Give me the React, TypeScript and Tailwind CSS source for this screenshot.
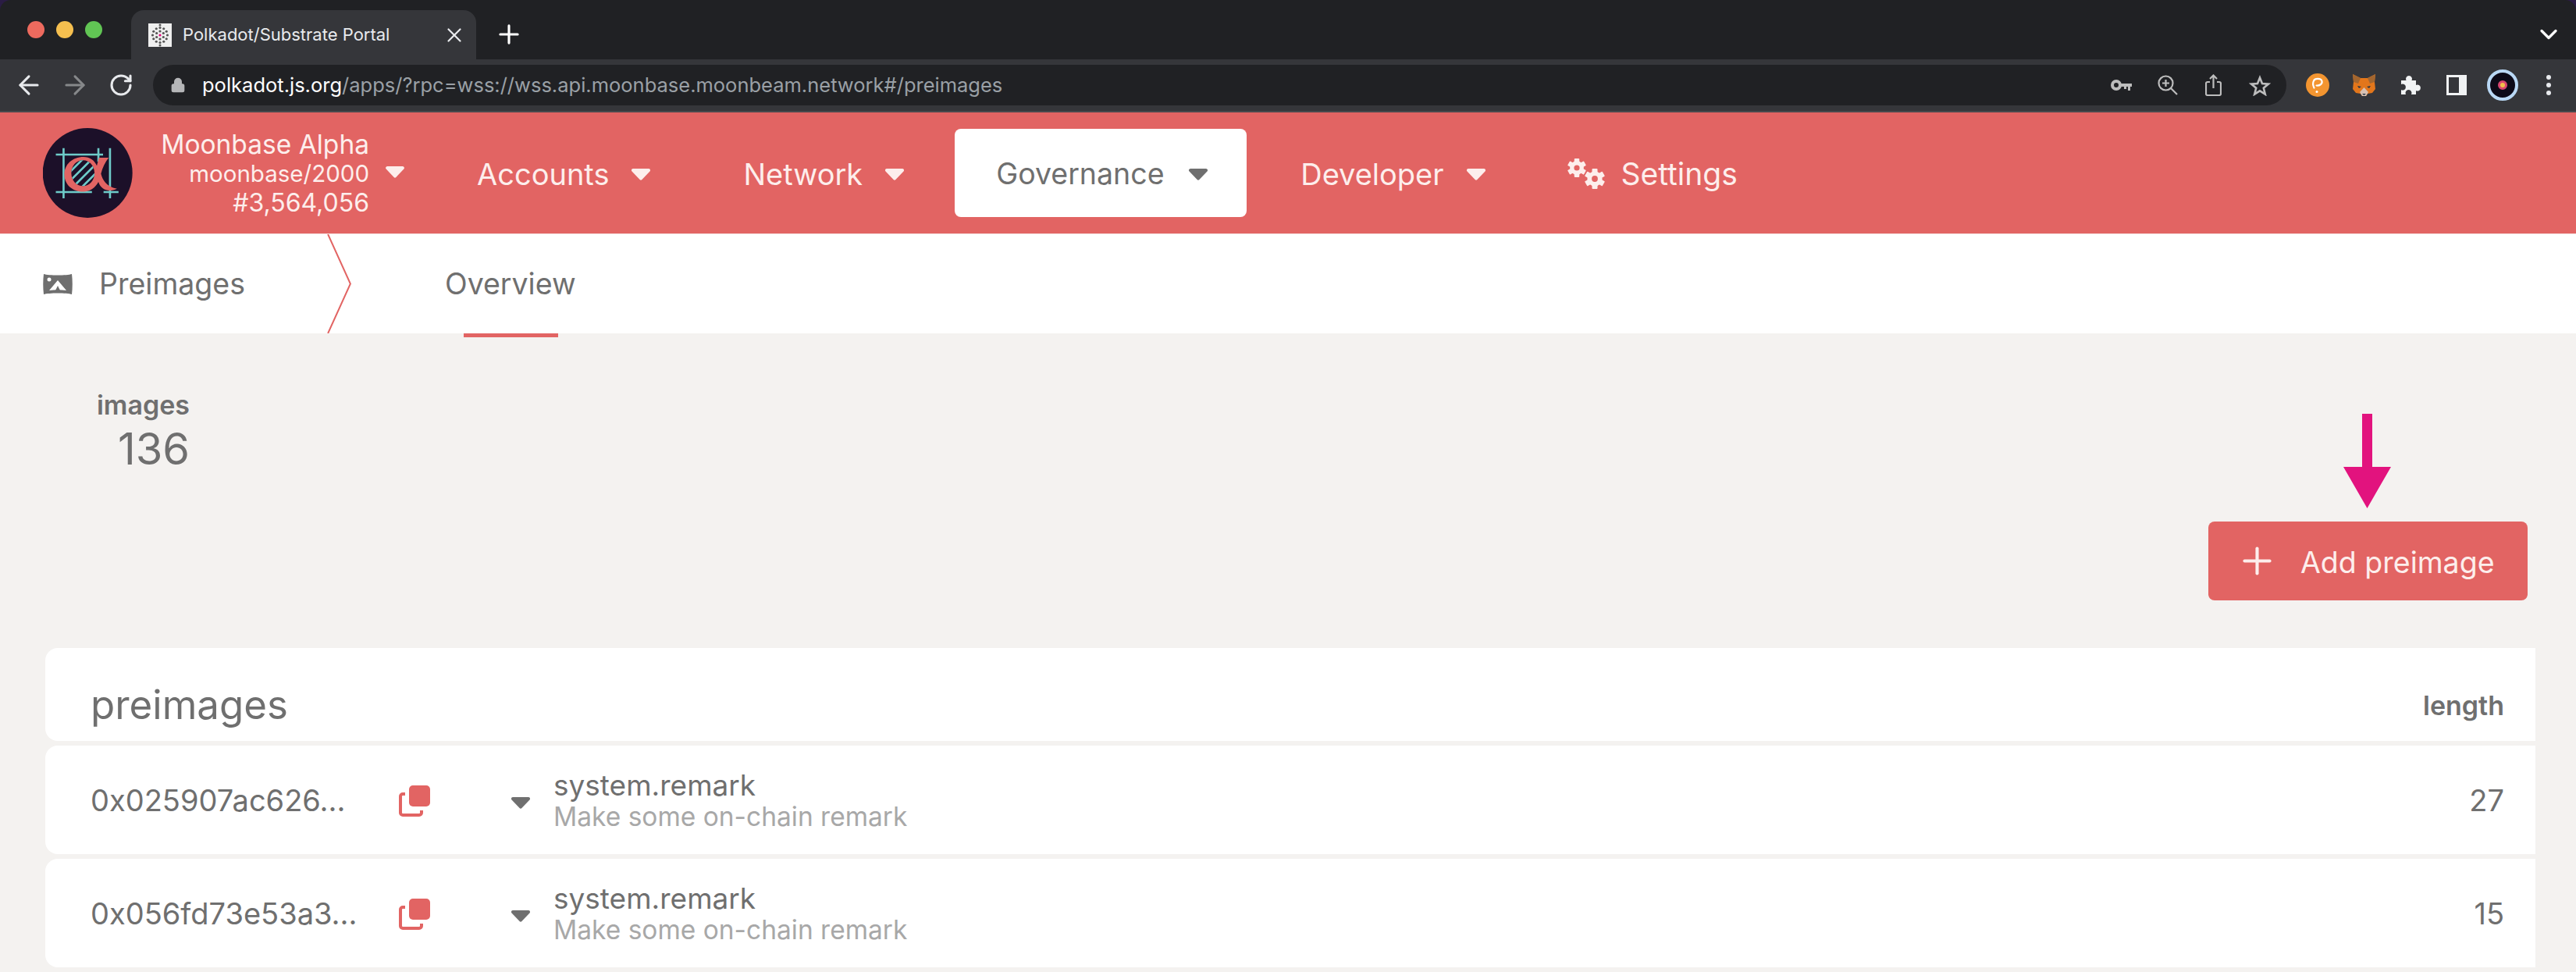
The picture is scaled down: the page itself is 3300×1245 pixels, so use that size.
import React from "react";
import { ArrowLeft, ArrowRight, RotateCw, Lock, Plus, X, ChevronDown } from "lucide-react";

const Caret = ({ className }: { className: string }) => (
  <svg viewBox="0 0 26 16" className={className} fill="currentColor">
    <path d="M2.5 0h21c2 0 3 2 2 3.500L14.500 15c-.8 1-2.200 1-3 0L.5 3.500C-.5 2 .5 0 2.500 0z" />
  </svg>
);

const Favicon = () => {
  const rings = [
    { r: 5, n: 6, off: 0 },
    { r: 9.5, n: 12, off: 0 },
  ];
  return (
    <svg viewBox="0 0 30 30" className="w-[30px] h-[30px] ml-[22px] shrink-0">
      <rect width="30" height="30" fill="#efefef" />
      <circle cx="15" cy="15" r="1.600" fill="#e6007a" />
      {rings.map((ring) =>
        Array.from({ length: ring.n }).map((_, i) => {
          const a = (i / ring.n) * Math.PI * 2 + Math.PI / 2;
          return <circle key={`${ring.r}-${i}`} cx={15 + ring.r * Math.cos(a)} cy={15 + ring.r * Math.sin(a)} r="1.600" fill="#555" />;
        })
      )}
      <circle cx="15" cy="2" r="1.500" fill="#555" />
      <circle cx="15" cy="28" r="1.500" fill="#555" />
    </svg>
  );
};

const Logo = () => (
  <svg viewBox="75 40 348 348" className="w-[115px] h-[115px] shrink-0">
    <defs>
      <clipPath id="hole">
        <ellipse cx="230" cy="215" rx="45" ry="50" />
      </clipPath>
    </defs>
    <circle cx="248" cy="214" r="174" fill="#1c1029" />
    <g stroke="#6ecbc9" strokeWidth="8">
      <path d="M155 118V312M290 118V170M335 118V312M125 143H308M125 288H265M310 288H368" />
    </g>
    <path
      fillRule="evenodd"
      fill="#e26463"
      d="M232 152c25 0 42 12 52 34l8-31h38c-14 18-24 38-30 62 6 24 20 50 62 58-30 14-60 8-72-26-12 22-32 38-58 38-42 0-74-28-74-68 0-38 32-67 74-67zM230 165c-26 0-45 22-45 50s19 50 45 50 45-22 45-50-19-50-45-50z"
    />
    <g clipPath="url(#hole)" stroke="#6ecbc9" strokeWidth="8">
      <path d="M170 220L240 150M180 245L270 155M200 260L290 170M225 270L295 200" />
    </g>
  </svg>
);

const CopyIcon = () => (
  <svg viewBox="0 0 40 40" className="w-[40px] h-[40px] ml-[58px] shrink-0">
    <rect x="13" y="0" width="27" height="27" rx="5" fill="#e26463" />
    <path d="M8 11H5a3 3 0 0 0-3 3v21a3 3 0 0 0 3 3h21a3 3 0 0 0 3-3v-3" fill="none" stroke="#e26463" strokeWidth="4" />
  </svg>
);

const Gear = ({ cx, cy, r }: { cx: number; cy: number; r: number }) => (
  <g>
    <circle cx={cx} cy={cy} r={r * 0.74} fill="#fdeeec" />
    {[0, 60, 120].map((deg) => (
      <rect
        key={deg}
        x={cx - r * 0.27}
        y={cy - r}
        width={r * 0.54}
        height={r * 2}
        rx="1"
        fill="#fdeeec"
        transform={`rotate(${deg} ${cx} ${cy})`}
      />
    ))}
    <circle cx={cx} cy={cy} r={r * 0.3} fill="#e26463" />
  </g>
);

const Gears = () => (
  <svg viewBox="0 0 48 42" className="w-[48px] h-[42px] shrink-0">
    <Gear cx={12} cy={13} r={12} />
    <Gear cx={35} cy={27} r={13} />
  </svg>
);

const ImageIcon = () => (
  <svg viewBox="0 0 38 28" className="w-[38px] h-[28px] ml-[55px] shrink-0" fill="#6f6f6f">
    <path d="M1 1c6 2 30 2 36 0 1 8 1 18 0 26-6-2-30-2-36 0-1-8-1-18 0-26z" />
    <path d="M8 22l11-13 11 13c-7-1-15-1-22 0z" fill="#fff" />
    <circle cx="8" cy="8" r="2.500" fill="#fff" />
    <path d="M16 22l3-6 3 6z" fill="#6f6f6f" />
  </svg>
);

const KeyIcon = () => (
  <svg viewBox="0 0 27 14" className="ml-auto w-[27px] h-[14px] shrink-0">
    <circle cx="7" cy="7" r="5" fill="none" stroke="#bdbdbd" strokeWidth="4" />
    <path d="M12 5h15v4h-2v5h-3V9h-2v3h-3V9h-5z" fill="#bdbdbd" />
  </svg>
);

const ZoomIcon = () => (
  <svg viewBox="0 0 26 26" className="ml-[33px] w-[26px] h-[26px] shrink-0" fill="none" stroke="#bdbdbd" strokeWidth="2.200">
    <circle cx="10.500" cy="10.500" r="9" />
    <path d="M17 17l8 8M10.500 6v9M6 10.500h9" />
  </svg>
);

const ShareIcon = () => (
  <svg viewBox="0 0 21 28" className="ml-[35px] w-[21px] h-[28px] shrink-0" fill="none" stroke="#bdbdbd" strokeWidth="2.200">
    <path d="M6 10H3a2 2 0 0 0-2 2v13a2 2 0 0 0 2 2h15a2 2 0 0 0 2-2V12a2 2 0 0 0-2-2h-3" />
    <path d="M10.500 18V2M6 6l4.500-4.500L15 6" />
  </svg>
);

const StarIcon = () => (
  <svg viewBox="0 0 28 27" className="ml-[35px] mr-[20px] w-[28px] h-[27px] shrink-0" fill="none" stroke="#bdbdbd" strokeWidth="2.600">
    <path d="M14 3.500l3 7.500 8 .600-6.200 5.200 2 7.900-6.800-4.300-6.800 4.300 2-7.900L3 11.600l8-.600z" />
  </svg>
);

const PolkadotExt = () => (
  <svg viewBox="0 0 30 30" className="ml-[25px] w-[30px] h-[30px] shrink-0">
    <circle cx="15" cy="15" r="15" fill="#f39530" />
    <path d="M10.500 18.500c-1.500-3-1.500-7-.5-9 1.500-3.500 9.500-3.500 10.500.5 .8 3.500-3 6-7 5.500" fill="none" stroke="#fff" strokeWidth="2.200" strokeLinecap="round" />
    <circle cx="14" cy="23.500" r="1.500" fill="#fff" />
  </svg>
);

const Fox = () => (
  <svg viewBox="0 0 29 28" className="w-[29px] h-[28px] ml-[30px] shrink-0">
    <path d="M0 0l10 5h9L29 0l-1 10 1 9-4 5-6 1-2 3h-5l-2-3-6-1-4-5 1-9z" fill="#e2761b" />
    <path d="M0 0l10 5-3 7-6-2zM29 0L19 5l3 7 6-2z" fill="#a3662f" />
    <path d="M9 23l5.500-6 5.500 6-3 5h-5z" fill="#d7c1b3" />
    <path d="M12 25h5l-2.500 2z" fill="#233447" />
    <path d="M6 15l5 1-3 2zM23 15l-5 1 3 2z" fill="#233447" />
  </svg>
);

const PuzzleIcon = () => (
  <svg viewBox="0 0 27 27" className="ml-[32px] w-[27px] h-[27px] shrink-0" fill="#f1f3f4">
    <path d="M1 7h6.500a4 4 0 1 1 7 0H20v6a4 4 0 1 1 0 7v5H14a4 4 0 1 0-7 0H1v-6a4 4 0 1 0 0-7z" />
  </svg>
);

const Row = ({ hash, len }: { hash: string; len: string }) => (
  <div className="flex items-center h-[139px] bg-white rounded-l-[16px] mt-[6px] pt-[2px] pl-[58px] pr-[40px] text-[#6f6f6f]">
    <div className="w-[337px] text-[38px] whitespace-nowrap">{hash}</div>
    <CopyIcon />
    <Caret className="w-[26px] h-[15px] ml-[103px] mt-[6px] shrink-0" />
    <div className="ml-[29px] flex flex-col">
      <div className="text-[37px] leading-[41px]">system.remark</div>
      <div className="text-[33.500px] leading-[41px] text-[#a8a8a8]">Make some on-chain remark</div>
    </div>
    <div className="ml-auto text-[38px]">{len}</div>
  </div>
);

const NavItem = ({ label, className }: { label: string; className: string }) => (
  <div className={`flex items-center gap-[28px] text-[38px] text-[#fdeeec] mt-[3px] ${className}`}>
    <span>{label}</span>
    <Caret className="w-[26px] h-[15px] shrink-0" />
  </div>
);

export default function App() {
  return (
    <div className="w-[3300px] h-[1245px] overflow-hidden bg-[#f4f2f0] font-['Inter','Noto_Sans',sans-serif]">
      <div className="bg-[#2a1c44]">
        {/* browser chrome */}
        <div className="bg-[#202124] h-[76px] rounded-t-[14px] flex items-end text-white">
          <div className="flex gap-[15px] ml-[35px] mb-[27px] mr-[37px]">
            <div className="w-[22px] h-[22px] rounded-full bg-[#ed6a5e]" />
            <div className="w-[22px] h-[22px] rounded-full bg-[#f5bf4f]" />
            <div className="w-[22px] h-[22px] rounded-full bg-[#61c554]" />
          </div>
          <div className="w-[442px] h-[63px] bg-[#35363a] rounded-t-[16px] flex items-center">
            <Favicon />
            <span className="ml-[14px] text-[22px] text-[#e8eaed] whitespace-nowrap">Polkadot/Substrate Portal</span>
            <X className="ml-auto mr-[13px] w-[30px] h-[30px] text-[#e8eaed]" strokeWidth={1.800} />
          </div>
          <Plus className="ml-[23px] mb-[13px] w-[38px] h-[38px]" strokeWidth={2} />
          <ChevronDown className="ml-auto mr-[17px] mb-[14px] w-[36px] h-[36px]" strokeWidth={2.200} />
        </div>
      </div>
      <div className="bg-[#35363a] h-[68px] border-b-2 border-[#48494d] flex items-center text-[#e8eaed]">
        <ArrowLeft className="ml-[18px] w-[38px] h-[38px] shrink-0" strokeWidth={1.900} />
        <ArrowRight className="ml-[21px] w-[38px] h-[38px] shrink-0 text-[#86888a]" strokeWidth={1.900} />
        <RotateCw className="ml-[24px] w-[32px] h-[32px] shrink-0" strokeWidth={2.300} />
        <div className="ml-[25px] w-[2733px] h-[52px] rounded-full bg-[#202124] flex items-center shrink-0">
          <Lock className="ml-[22px] w-[20px] h-[20px] text-[#b5b6b8] shrink-0" fill="#b5b6b8" />
          <span className="ml-[21px] text-[25.500px] whitespace-nowrap text-white">
            polkadot.js.org<span className="text-[#9aa0a6]">/apps/?rpc=wss://wss.api.moonbase.moonbeam.network#/preimages</span>
          </span>
          <KeyIcon />
          <ZoomIcon />
          <ShareIcon />
          <StarIcon />
        </div>
        <PolkadotExt />
        <Fox />
        <PuzzleIcon />
        <div className="ml-[32px] w-[26px] h-[26px] border-[3px] border-r-[10px] border-[#f1f3f4] shrink-0" />
        <div className="ml-[26px] w-[40px] h-[40px] rounded-full bg-[#0c0a18] border-[4px] border-[#b9d8f5] flex items-center justify-center shrink-0">
          <div className="w-[12px] h-[12px] rounded-full bg-[#f0c04a] border-[3px] border-[#d9466f]" />
        </div>
        <div className="ml-[36px] flex flex-col gap-[4px] shrink-0">
          <div className="w-[6px] h-[6px] rounded-full bg-[#e8eaed]" />
          <div className="w-[6px] h-[6px] rounded-full bg-[#e8eaed]" />
          <div className="w-[6px] h-[6px] rounded-full bg-[#e8eaed]" />
        </div>
      </div>

      {/* app nav */}
      <div className="h-[155px] bg-[#e26463] flex items-center pl-[55px]">
        <Logo />
        <div className="ml-[37px] mt-[2px] w-[266px] shrink-0 flex flex-col items-end text-[32px] leading-[37px] text-[#fdeeec] whitespace-nowrap">
          <div className="text-[33.500px]">Moonbase Alpha</div>
          <div className="text-[29.500px]">moonbase/2000</div>
          <div>#3,564,056</div>
        </div>
        <Caret className="w-[24px] h-[15px] ml-[21px] mb-[2px] shrink-0 text-[#fdeeec]" />
        <NavItem label="Accounts" className="ml-[93px]" />
        <NavItem label="Network" className="ml-[118px]" />
        <div className="ml-[64px] w-[374px] h-[113px] rounded-[8px] bg-white flex items-center pt-[3px] pl-[53px] gap-[30px] text-[37.500px] text-[#6f6f6f]">
          <span>Governance</span>
          <Caret className="w-[26px] h-[15px] shrink-0" />
        </div>
        <NavItem label="Developer" className="ml-[69px]" />
        <div className="ml-[104px] mt-[3px] flex items-center gap-[21px] text-[39px] text-[#fdeeec]">
          <Gears />
          <span>Settings</span>
        </div>
      </div>

      {/* sub nav */}
      <div className="h-[128px] bg-white border-t border-[#f4dcdb] flex items-center text-[37.500px] text-[#6f6f6f]">
        <ImageIcon />
        <span className="ml-[34px] mt-[2px]">Preimages</span>
        <svg viewBox="0 0 32 128" className="w-[32px] h-[127px] ml-[105px] shrink-0" fill="none" stroke="#e26463" strokeWidth="2">
          <path d="M1 0L30 64L1 128" />
        </svg>
        <div className="ml-[119px] h-full flex items-center relative">
          <span className="mt-[2px]">Overview</span>
          <div className="absolute left-[24px] w-[121px] h-[5px] -bottom-[5px] bg-[#e26463]" />
        </div>
      </div>

      {/* content */}
      <div className="flex justify-between h-[403px] text-[#6f6f6f]">
        <div className="ml-[122px] w-[121px] mt-[73px] flex flex-col items-end">
          <div className="text-[34px] leading-[38px] font-semibold">images</div>
          <div className="text-[56px] leading-[70px] mt-[2px]">136</div>
        </div>
        <div className="mr-[62px] w-[409px] pt-[103px] flex flex-col items-center">
          <svg viewBox="0 0 61 121" className="w-[61px] h-[121px] -ml-[2px] shrink-0" fill="#e2137e">
            <path d="M24 0h13v68h24L30.500 121 0 68h24z" />
          </svg>
          <div className="mt-[17px] w-[409px] h-[101px] rounded-[8px] bg-[#e26463] flex items-center pl-[35px] gap-[28px] text-[37.500px] text-[#fdeeec]">
            <Plus className="w-[55px] h-[55px] shrink-0" strokeWidth={1.800} />
            <span className="mt-[5px]">Add preimage</span>
          </div>
        </div>
      </div>

      {/* table */}
      <div className="ml-[58px] mr-[52px]">
        <div className="flex items-center h-[119px] bg-white rounded-l-[16px] pt-[28px] pl-[58px] pr-[40px] text-[#6f6f6f]">
          <span className="text-[51px]">preimages</span>
          <span className="ml-auto text-[34px] font-semibold">length</span>
        </div>
        <Row hash="0x025907ac626..." len="27" />
        <Row hash="0x056fd73e53a3..." len="15" />
        <div className="h-[139px] bg-white rounded-l-[16px] mt-[6px]" />
      </div>
    </div>
  );
}
